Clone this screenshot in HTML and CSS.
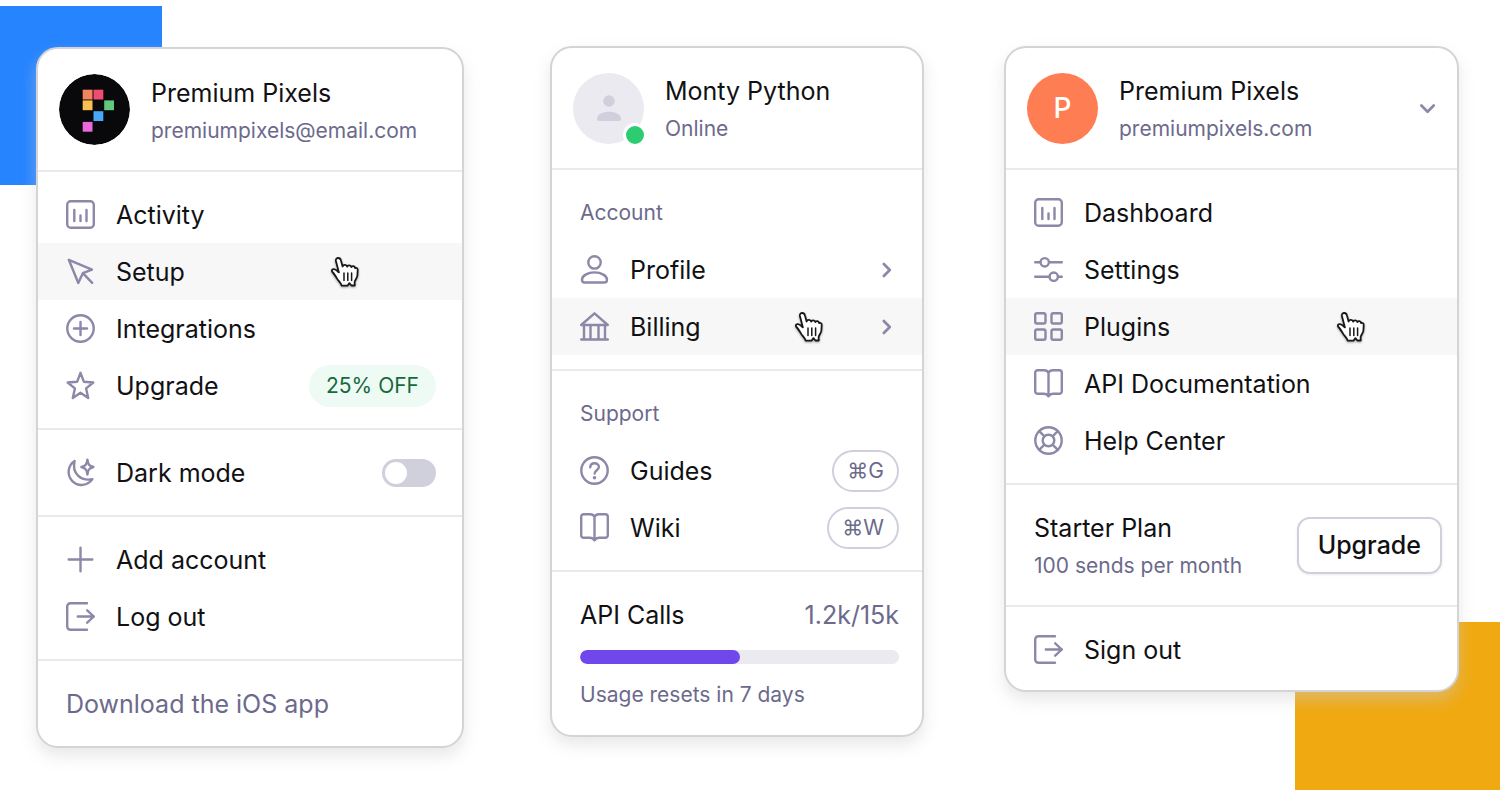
FILE: index.html
```html
<!DOCTYPE html>
<html lang="en">
<head>
<meta charset="utf-8">
<meta name="viewport" content="width=device-width, initial-scale=1">
<title>Account menus</title>
<link rel="stylesheet" href="styles.css">
</head>
<body>
<svg class="sprite" aria-hidden="true">
  <symbol id="i-chart" viewBox="0 0 29 29"><rect x="1.200" y="1.200" width="26.600" height="26.600" rx="3.500"/><path d="M8.300 10v11M14.500 15.500V21M20.500 10v11"/></symbol>
  <symbol id="i-cursor" viewBox="0 0 29 29"><path d="M2.800 2.800 26 12.600l-9.200 3.600-4.500 9.800zM16.800 16.200l9.400 9.600"/></symbol>
  <symbol id="i-circle-plus" viewBox="0 0 29 29"><circle cx="14.500" cy="14.500" r="13.200"/><path d="M14.500 8v13M8 14.500h13"/></symbol>
  <symbol id="i-star" viewBox="0 0 29 29"><path d="m14.500 1.800 3.300 8.900 9.500.8-7.200 5.900 2.100 9.600-7.700-5.200L6.800 27l2.100-9.600-7.200-5.900 9.500-.8z"/></symbol>
  <symbol id="i-moon" viewBox="0 0 29 29"><path d="M8.600 3A13 13 0 1 0 26.400 21.200C14.800 23.600 5.600 15.400 8.600 3z"/><path d="M21.400 1.600c.6 4.800 1.700 6.200 6 7.400-4.300 1.200-5.400 2.600-6 7.600-.6-5-1.700-6.400-6-7.600 4.300-1.200 5.400-2.600 6-7.400z"/></symbol>
  <symbol id="i-plus" viewBox="0 0 29 29"><path d="M14.500 2.700v23.600M2.700 14.500h23.600"/></symbol>
  <symbol id="i-exit" viewBox="0 0 29 29"><path d="M21 1.200H4.500A3.300 3.300 0 0 0 1.200 4.500v20a3.300 3.300 0 0 0 3.300 3.300H21M11.800 14.500H28M21.200 8.300l6.600 6.200-6.600 6.200"/></symbol>
  <symbol id="i-user" viewBox="0 0 29 29"><circle cx="14.500" cy="7.400" r="6.200"/><path d="M14.500 17.400C7.500 17.400 2 20.800 2 24.800c0 1.800 1 2.700 2.700 2.700h19.600c1.700 0 2.700-.9 2.700-2.700 0-4-5.500-7.400-12.500-7.400z"/></symbol>
  <symbol id="i-bank" viewBox="0 0 29 29"><path d="M1.200 13 14.500 1.300 27.800 13zM1.200 27.500h26.600M4 13v14.500M10.500 13v14.500M18.500 13v14.500M25 13v14.500"/></symbol>
  <symbol id="i-question" viewBox="0 0 29 29"><circle cx="14.500" cy="14.500" r="13.200"/><path d="M10.200 11.300c.2-2.400 1.900-4 4.400-4s4.300 1.600 4.300 3.800c0 3-4.300 3.300-4.300 6.400"/><circle class="dot" cx="14.500" cy="21.800" r="1.800"/></symbol>
  <symbol id="i-book" viewBox="0 0 29 29"><path d="M14.500 3.700C13.600 2 12.200 1.200 10.200 1.200H3.700A2.500 2.500 0 0 0 1.200 3.700v18.600a2.500 2.500 0 0 0 2.500 2.500h6c2.400 0 3.800.8 4.800 2.500 1-1.700 2.400-2.500 4.800-2.500h6a2.500 2.500 0 0 0 2.500-2.500V3.700a2.500 2.500 0 0 0-2.500-2.500h-6.500c-2 0-3.400.8-4.300 2.500zV26"/></symbol>
  <symbol id="i-sliders" viewBox="0 0 29 29"><path d="M1.200 7.300h5.300M15 7.300h12.800M1.200 21.700h14.300M24 21.700h3.800"/><circle cx="10.700" cy="7.300" r="4.200"/><circle cx="19.700" cy="21.700" r="4.200"/></symbol>
  <symbol id="i-grid" viewBox="0 0 29 29"><rect x="1.200" y="1.200" width="10.300" height="10.300" rx="1.800"/><rect x="17.500" y="1.200" width="10.300" height="10.300" rx="1.800"/><rect x="1.200" y="17.500" width="10.300" height="10.300" rx="1.800"/><rect x="17.500" y="17.500" width="10.300" height="10.300" rx="1.800"/></symbol>
  <symbol id="i-ring" viewBox="0 0 29 29"><circle cx="14.500" cy="14.500" r="13.200"/><circle cx="14.500" cy="14.500" r="5.800"/><path d="m5.200 5.200 5 5M23.800 5.200l-5 5M5.200 23.800l5-5M23.800 23.800l-5-5"/></symbol>
  <symbol id="i-right" viewBox="0 0 16 16"><path d="m2.500 2.700 5.300 5.300-5.300 5.300"/></symbol>
  <symbol id="i-down" viewBox="0 0 16 16"><path d="m3 5.800 5.500 5.500L14 5.800"/></symbol>
  <symbol id="i-hand" viewBox="0 0 28 32">
    <path class="hand-shape" d="M4.900 4C4.600 2 5.800 1 7.200 1s2.400 1 2.700 2.300l1.700 6.200c.6-2.100 4.100-2.200 4.500.2.700-2 3.800-1.800 4.300.4.900-1.700 3.500-1.200 3.700 1 1.400-.8 2.700.3 2.600 1.900l-.3 5.500c-.2 2.600-2.400 4.500-2.800 6.700l.2 3.300h-3.400l-2-2.400-1.900 2.600h-5.700c-.6-2.200-2.300-3.900-4.200-6.200-1.700-2.800-3.300-5.600-5.200-7.500-1.200-1.600 0-3.200 1.700-2.900 1.900.2 3.400 1.900 4.800 3.300z"/>
    <path class="hand-lines" d="M13 16v7.500M16.800 16v7.500M20.600 16v7.500"/>
  </symbol>
</svg>

<div class="shape shape-blue"></div>
<div class="shape shape-gold"></div>

<main class="menus">
  <section class="card card-personal" aria-label="Personal account">
    <header class="identity">
      <svg class="avatar" viewBox="0 0 71 71" role="img" aria-label="Premium Pixels logo">
        <circle cx="35.500" cy="35.500" r="35.500" fill="#09090b"/>
        <rect x="23.700" y="15.700" width="9.800" height="9.800" fill="#f4845f"/>
        <rect x="34.500" y="15.700" width="9.800" height="9.800" fill="#ec4d72"/>
        <rect x="23.700" y="26.400" width="9.800" height="9.800" fill="#fbc04f"/>
        <rect x="45.200" y="26.400" width="9.800" height="9.800" fill="#60c97c"/>
        <rect x="34.500" y="37.200" width="9.800" height="9.800" fill="#4aa8f8"/>
        <rect x="23.700" y="47.900" width="9.800" height="9.800" fill="#ea69dc"/>
      </svg>
      <div class="lines">
        <h2 class="title">Premium Pixels</h2>
        <p class="sub">premiumpixels@email.com</p>
      </div>
    </header>
    <nav class="group">
      <a class="item" href="#activity"><svg class="icon"><use href="#i-chart"/></svg>Activity</a>
      <a class="item active" href="#setup"><svg class="icon"><use href="#i-cursor"/></svg>Setup<svg class="hand"><use href="#i-hand"/></svg></a>
      <a class="item" href="#integrations"><svg class="icon"><use href="#i-circle-plus"/></svg>Integrations</a>
      <a class="item" href="#upgrade"><svg class="icon"><use href="#i-star"/></svg>Upgrade<span class="end offer">25% OFF</span></a>
    </nav>
    <div class="group">
      <label class="item" for="dark"><svg class="icon"><use href="#i-moon"/></svg>Dark mode<input class="end toggle" type="checkbox" role="switch" id="dark"></label>
    </div>
    <nav class="group">
      <a class="item" href="#add"><svg class="icon"><use href="#i-plus"/></svg>Add account</a>
      <a class="item" href="#logout"><svg class="icon"><use href="#i-exit"/></svg>Log out</a>
    </nav>
    <div class="group">
      <a class="item muted" href="#ios">Download the iOS app</a>
    </div>
  </section>

  <section class="card card-profile" aria-label="Profile">
    <header class="identity">
      <div class="avatar person">
        <svg class="person-icon" viewBox="0 0 24 26"><circle cx="12" cy="6" r="5.800"/><path d="M0 24c0-5 6-7.300 12-7.300S24 19 24 24c0 1.300-.7 2-2 2H2c-1.300 0-2-.7-2-2z"/></svg>
        <span class="presence"></span>
      </div>
      <div class="lines">
        <h2 class="title">Monty Python</h2>
        <p class="sub">Online</p>
      </div>
    </header>
    <nav class="group">
      <h3 class="label">Account</h3>
      <a class="item" href="#profile"><svg class="icon"><use href="#i-user"/></svg>Profile<svg class="end chevron"><use href="#i-right"/></svg></a>
      <a class="item active" href="#billing"><svg class="icon"><use href="#i-bank"/></svg>Billing<svg class="end chevron"><use href="#i-right"/></svg><svg class="hand"><use href="#i-hand"/></svg></a>
    </nav>
    <nav class="group">
      <h3 class="label">Support</h3>
      <a class="item" href="#guides"><svg class="icon"><use href="#i-question"/></svg>Guides<kbd class="end key">⌘G</kbd></a>
      <a class="item" href="#wiki"><svg class="icon"><use href="#i-book"/></svg>Wiki<kbd class="end key">⌘W</kbd></a>
    </nav>
    <div class="group usage">
      <div class="usage-row"><label for="calls">API Calls</label><span class="muted">1.2k/15k</span></div>
      <progress class="meter" id="calls" value="50" max="100"></progress>
      <p class="sub">Usage resets in 7 days</p>
    </div>
  </section>

  <section class="card card-team" aria-label="Team account">
    <header class="identity">
      <div class="avatar initial">P</div>
      <div class="lines">
        <h2 class="title">Premium Pixels</h2>
        <p class="sub">premiumpixels.com</p>
      </div>
      <button class="end switcher" type="button" aria-label="Switch account"><svg class="chevron"><use href="#i-down"/></svg></button>
    </header>
    <nav class="group">
      <a class="item" href="#dashboard"><svg class="icon"><use href="#i-chart"/></svg>Dashboard</a>
      <a class="item" href="#settings"><svg class="icon"><use href="#i-sliders"/></svg>Settings</a>
      <a class="item active" href="#plugins"><svg class="icon"><use href="#i-grid"/></svg>Plugins<svg class="hand"><use href="#i-hand"/></svg></a>
      <a class="item" href="#docs"><svg class="icon"><use href="#i-book"/></svg>API Documentation</a>
      <a class="item" href="#help"><svg class="icon"><use href="#i-ring"/></svg>Help Center</a>
    </nav>
    <div class="plan">
      <div class="lines">
        <h3 class="title">Starter Plan</h3>
        <p class="sub">100 sends per month</p>
      </div>
      <button class="end upgrade" type="button">Upgrade</button>
    </div>
    <nav class="group">
      <a class="item" href="#signout"><svg class="icon"><use href="#i-exit"/></svg>Sign out</a>
    </nav>
  </section>
</main>
</body>
</html>
```
FILE: styles.css
```css
:root {
  --ink: #111114;
  --muted: #6c6a8c;
  --icon: #8b88a8;
  --line: #e9e9ee;
  --edge: #d4d4d6;
}

* { box-sizing: border-box; }

body {
  margin: 0;
  position: relative;
  min-height: 100vh;
  overflow-x: hidden;
  background: #fff;
  color: var(--ink);
  font: 400 25px/38px Inter, "Liberation Sans", sans-serif;
}

h2, h3, p { margin: 0; font-size: 25px; font-weight: 400; }

.sprite { position: absolute; width: 0; height: 0; }

.shape { position: absolute; }
.shape-blue { left: 0; top: 6px; width: 162px; height: 179px; background: #2684ff; }
.shape-gold { right: 0; bottom: 0; width: 205px; height: 168px; background: #f0a910; }

.menus {
  position: relative;
  display: grid;
  grid-template-columns: 428fr 86px 374fr 80px 455fr;
  align-items: start;
  padding: 46px 41px 40px 36px;
}

.card {
  --end: 26px;
  border: 2px solid var(--edge);
  border-radius: 22px;
  background: #fff;
  box-shadow: 0 8px 16px rgba(205, 205, 208, .45);
}
.card-personal { grid-column: 1; margin-top: 1px; }
.card-profile { grid-column: 3; --end: 23px; }
.card-team { grid-column: 5; --end: 15px; }

.identity {
  display: flex;
  align-items: center;
  gap: 21px;
  min-height: 120px;
  padding: 0 var(--end) 0 21px;
}
.card-personal .identity { min-height: 121px; }

.lines { padding-top: 4px; }

.avatar { flex: none; width: 71px; height: 71px; border-radius: 50%; }

.person {
  position: relative;
  display: grid;
  place-items: center;
  background: #ebeaf0;
}
.person-icon { width: 24px; height: 26px; fill: #d0cfdc; }
.presence {
  position: absolute;
  right: -3px;
  bottom: -3px;
  width: 24px;
  height: 24px;
  border: 3px solid #fff;
  border-radius: 50%;
  background: #2ecc71;
}

.initial {
  display: grid;
  place-items: center;
  background: #ff7d52;
  color: #fff;
  font-size: 28px;
  font-weight: 500;
}

.sub, .label { color: var(--muted); font-size: 21px; }
.muted { color: var(--muted); }

.end { margin-left: auto; }

.group { padding: 14px 0; border-top: 2px solid var(--line); }
.card-team .group:last-child { padding-bottom: 12px; }

.item {
  position: relative;
  display: flex;
  align-items: center;
  gap: 21px;
  height: 57px;
  padding: 0 var(--end) 0 28px;
  color: var(--ink);
  text-decoration: none;
}
.item.muted { color: var(--muted); }
.active { background: #f7f7f7; }

.label { height: 57px; padding-left: 28px; line-height: 57px; }

.icon, .chevron {
  flex: none;
  fill: none;
  stroke: var(--icon);
  stroke-width: 2.4;
  stroke-linecap: round;
  stroke-linejoin: round;
}
.icon { width: 29px; height: 29px; }
.chevron { width: 18px; height: 18px; }
.dot { fill: var(--icon); stroke: none; }

.hand {
  position: absolute;
  top: 14px;
  right: 103px;
  width: 28px;
  height: 32px;
  filter: drop-shadow(0 1px 1px rgba(0, 0, 0, .35));
}
.card-profile .hand { right: 99px; }
.card-team .hand { right: 92px; }
.hand-shape { fill: #fff; stroke: #18181b; stroke-width: 1.8; stroke-linejoin: round; }
.hand-lines { fill: none; stroke: #18181b; stroke-width: 1.5; stroke-linecap: round; }

.offer {
  padding: 2px 17px;
  border-radius: 21px;
  background: #eefbf4;
  color: #17693c;
  font-size: 21px;
}

.toggle {
  appearance: none;
  width: 54px;
  height: 28px;
  margin-block: 0;
  margin-right: 0;
  padding: 3px;
  border-radius: 14px;
  background: #d0cfdc;
}
.toggle::before {
  content: "";
  display: block;
  width: 22px;
  height: 22px;
  border-radius: 50%;
  background: #fff;
}
.toggle:checked { background: #6f47eb; }
.toggle:checked::before { margin-left: auto; }

.key {
  padding: 0 13px;
  border: 2px solid #d0cfdc;
  border-radius: 21px;
  color: var(--muted);
  font: 400 21px/38px Inter, "Liberation Sans", sans-serif;
}

.usage { padding-inline: 28px var(--end); }
.usage-row {
  display: flex;
  align-items: center;
  justify-content: space-between;
  height: 57px;
}
.meter {
  appearance: none;
  display: block;
  width: 100%;
  height: 14px;
  margin: 7px 0 12px;
  border: 0;
  border-radius: 7px;
  background: #ebeaf0;
  overflow: hidden;
}
.meter::-webkit-progress-bar { background: #ebeaf0; border-radius: 7px; }
.meter::-webkit-progress-value { background: #6f47eb; border-radius: 7px; }
.group.usage { padding-bottom: 21px; }

.switcher {
  display: grid;
  place-items: center;
  width: 30px;
  height: 40px;
  padding: 0;
  border: 0;
  background: none;
}

.plan {
  display: flex;
  align-items: center;
  min-height: 122px;
  padding: 0 var(--end) 0 28px;
  border-top: 2px solid var(--line);
}

.upgrade {
  height: 57px;
  padding: 0 19px;
  border: 2px solid #d0cfdc;
  border-radius: 13px;
  background: #fff;
  box-shadow: 0 1px 3px rgba(0, 0, 0, .08);
  color: var(--ink);
  font: 500 25px/38px Inter, "Liberation Sans", sans-serif;
}

@media (max-width: 1300px) {
  .menus { display: flex; flex-direction: column; align-items: center; gap: 40px; }
  .card { width: 100%; max-width: 455px; }
}
```
